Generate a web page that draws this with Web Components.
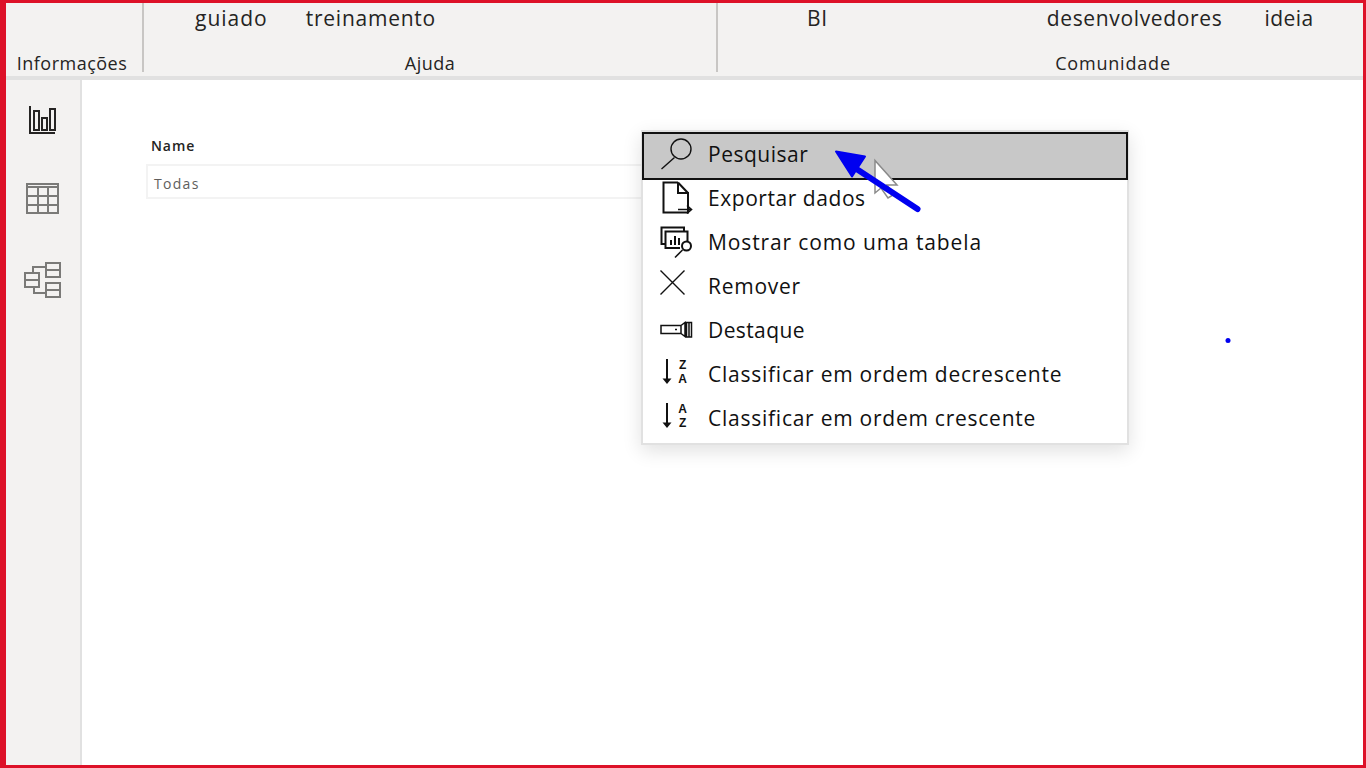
<!DOCTYPE html>
<html lang="pt"><head><meta charset="utf-8"><title>Power BI</title>
<style>
html,body{margin:0;padding:0;background:#fff;overflow:hidden}
body{font-family:"Open Sans","Liberation Sans",sans-serif;color:#252423}
</style></head><body>
<template id="t-frame"><style>
:host{display:flex;flex-direction:column;box-sizing:border-box;width:1366px;height:768px;border-style:solid;border-color:#dd1128;border-width:3px 3px 3px 6px;position:relative;overflow:hidden;background:#fff}
.main{flex:1;display:flex;min-height:0}
</style><slot name="ribbon"></slot><div class="main"><slot name="side"></slot><slot></slot></div><slot name="over"></slot></template>

<template id="t-ribbon"><style>
:host{display:flex;height:73px;flex:none;background:#f3f2f1;border-bottom:4px solid #e1e1e1;box-sizing:content-box;overflow:hidden}
</style><slot></slot></template>

<template id="t-group"><style>
:host{display:flex;flex-direction:column;flex:none;height:69px;box-sizing:content-box;border-right:2px solid #c8c6c4;width:var(--w);color:#252423}
:host([last]){border-right:0}
.items{flex:none;height:47px;display:flex;align-items:flex-start;font-size:21px;line-height:30px;padding-top:0}
.lab{flex:none;text-align:center;font-size:18px;line-height:22px;padding-top:2px;letter-spacing:.5px;white-space:nowrap}
</style><div class="items"><slot></slot></div><div class="lab"><slot name="label"></slot></div></template>

<template id="t-item"><style>
:host{display:block;white-space:nowrap;margin-left:var(--ml,0);letter-spacing:var(--ls,.65px)}
</style><slot></slot></template>

<template id="t-side"><style>
:host{display:flex;flex-direction:column;width:74px;flex:none;background:#f3f2f1;border-right:2px solid #e1e1e1;align-items:flex-start;padding-top:23px;box-sizing:content-box}
svg{display:block;width:74px;height:40px;margin-bottom:40px;fill:none;stroke:#7a7a78;stroke-width:2;shape-rendering:crispEdges}
svg.b{stroke:#252423}
svg.t{margin-bottom:39px}
</style>
<svg class="b" viewBox="0 0 74 40"><path d="M24 3V29.500H49"/><path d="M28 7.500h5v19h-5zM36 14.500h5v12h-5zM44 5.500h5v21h-5z" stroke-width="2"/></svg>
<svg class="t" viewBox="0 0 74 40"><path d="M21 1h31v29H21zM21 4h31M21 13h31M21 21.500h31M31.500 4v26M41.500 4v26"/></svg>
<svg viewBox="0 0 74 40"><path d="M40 1h14v14H40zM40 8h14M19 11h14v14H19zM19 18h14M40 21h14v14H40zM40 28h14M27 11V5H40M28 25v6H40"/></svg>
</template>

<template id="t-canvas"><style>
:host{display:block;flex:1;position:relative;background:#fff;padding:56px 0 0 64px;box-sizing:border-box;min-width:0}
.name{font-size:14px;line-height:20px;font-weight:600;letter-spacing:.9px;padding-left:5px;color:#252423}
.box{margin-top:8px;width:530px;height:31px;border:2px solid #f3f3f3;font-size:14px;line-height:35px;padding-left:6px;color:#605e5c;letter-spacing:1.3px;box-sizing:content-box}
</style><div class="name"><slot name="name"></slot></div><div class="box"><slot name="value"></slot></div><slot></slot></template>

<template id="t-menu"><style>
:host{display:block;position:absolute;left:635px;top:127px;width:484px;background:#fff;border:2px solid #e1e1e1;box-shadow:0 6px 18px rgba(0,0,0,.12);padding:0 0 3px;box-sizing:content-box}
</style><slot></slot></template>

<template id="t-row"><style>
:host{display:flex;align-items:center;height:44px;padding-left:17px;gap:12px;box-sizing:border-box;font-size:21px;letter-spacing:.75px;color:#111;white-space:nowrap;position:relative}
:host([active]){height:48px;margin:0 0 -4px -1px;padding:0 0 4px 18px;background:#c8c8c8;outline:2px solid #111;outline-offset:-2px;width:486px}
.ic{width:36px;height:36px;flex:none;display:block}
::slotted(svg){display:block;width:36px;height:36px}
</style><span class="ic"><slot name="icon"></slot></span><span><slot></slot></span></template>

<template id="t-over"><style>
:host{display:block;position:absolute;left:-6px;top:-3px;width:1366px;height:768px;pointer-events:none}
svg{display:block;position:absolute;left:0;top:0}
</style><svg width="1366" height="768" viewBox="0 0 1366 768">
<path d="M875 160.500V193l6-5 7 10 5-3-6-10h10z" fill="#fff" stroke="#8a8a8a" stroke-width="1.500"/>
<path d="M917.500 209L852 166" stroke="#0000f0" stroke-width="6" stroke-linecap="round" fill="none"/>
<path d="M836 151.500L865 156.500 852 176.500z" fill="#0000f0" stroke="#0000f0" stroke-width="2" stroke-linejoin="round"/>
<circle cx="1228" cy="340.500" r="2.500" fill="#0000f0"/>
</svg></template>

<script>
function def(tag,tid){customElements.define(tag,class extends HTMLElement{constructor(){super();this.attachShadow({mode:'open'}).appendChild(document.getElementById(tid).content.cloneNode(true));}});}
[['pb-frame','t-frame'],['pb-ribbon','t-ribbon'],['pb-group','t-group'],['pb-item','t-item'],['pb-side','t-side'],['pb-canvas','t-canvas'],['pb-menu','t-menu'],['pb-row','t-row'],['pb-over','t-over']].forEach(a=>def(a[0],a[1]));
</script>

<pb-frame>
<pb-ribbon slot="ribbon">
<pb-group style="--w:136px"><span slot="label" style="margin-right:4px">Informações</span></pb-group>
<pb-group style="--w:572px"><pb-item style="--ml:51px;--ls:1px">guiado</pb-item><pb-item style="--ml:38px;--ls:.75px">treinamento</pb-item><span slot="label">Ajuda</span></pb-group>
<pb-group last style="--w:790px"><pb-item style="--ml:89px">BI</pb-item><pb-item style="--ml:219px">desenvolvedores</pb-item><pb-item style="--ml:42px;--ls:.5px">ideia</pb-item><span slot="label" style="letter-spacing:.8px">Comunidade</span></pb-group>
</pb-ribbon>
<pb-side slot="side"></pb-side>
<pb-canvas><span slot="name">Name</span><span slot="value">Todas</span></pb-canvas>
<pb-menu slot="over">
<pb-row active style="letter-spacing:.5px"><svg slot="icon" viewBox="0 0 36 36" fill="none" stroke="#111" stroke-width="1.400"><circle cx="21" cy="13" r="10"/><path d="M14.500 21.500L1.500 33"/></svg>Pesquisar</pb-row>
<pb-row style="letter-spacing:.55px"><svg slot="icon" viewBox="0 0 36 36" fill="none" stroke="#111" stroke-width="2"><path d="M18 2.500H3.500V32.500H28V26M18 2.500V13H28V26M18 2.500L28 13" stroke-linejoin="miter"/><path d="M18 29.500H31M27 25.500l4.500 4-4.500 4" stroke-width="1.600"/></svg>Exportar dados</pb-row>
<pb-row style="letter-spacing:.88px"><svg slot="icon" viewBox="0 0 36 36" fill="none" stroke="#111" stroke-width="2"><path d="M5 20H1.500V3.500H24V7"/><path d="M20 24H5.500V7.500H27.500V17"/><path d="M11 21v-5M15 21v-9M19 21v-7"/><circle cx="26.500" cy="22" r="4.500"/><path d="M22.500 26L15 33.500" stroke-width="1.600"/></svg>Mostrar como uma tabela</pb-row>
<pb-row><svg slot="icon" viewBox="0 0 36 36" fill="none" stroke="#111" stroke-width="1.400"><path d="M0.500 2.500L24.500 26.500M24.500 2.500L0.500 26.500"/></svg>Remover</pb-row>
<pb-row style="letter-spacing:.4px"><svg slot="icon" viewBox="0 0 36 36" fill="none" stroke="#111" stroke-width="1.500"><path d="M1 13.500H21V21.500H1zM21 13.500l4-3V24.500l-4-3M26.500 10.500h5V25h-5zM29 10.500V25"/><path d="M15 17.500h2"/></svg>Destaque</pb-row>
<pb-row><svg slot="icon" viewBox="0 0 36 36" fill="none" stroke="#111" stroke-width="2"><path d="M7 3V25"/><path d="M2.500 22.500H11.500L7 28z" fill="#111" stroke="none"/><text x="23" y="13" text-anchor="middle" font-family="Liberation Sans" font-size="12" font-weight="700" fill="#111" stroke="none">Z</text><text x="23" y="27" text-anchor="middle" font-family="Liberation Sans" font-size="12" font-weight="700" fill="#111" stroke="none">A</text></svg>Classificar em ordem decrescente</pb-row>
<pb-row><svg slot="icon" viewBox="0 0 36 36" fill="none" stroke="#111" stroke-width="2"><path d="M7 3V25"/><path d="M2.500 22.500H11.500L7 28z" fill="#111" stroke="none"/><text x="23" y="13" text-anchor="middle" font-family="Liberation Sans" font-size="12" font-weight="700" fill="#111" stroke="none">A</text><text x="23" y="27" text-anchor="middle" font-family="Liberation Sans" font-size="12" font-weight="700" fill="#111" stroke="none">Z</text></svg>Classificar em ordem crescente</pb-row>
</pb-menu>
<pb-over slot="over"></pb-over>
</pb-frame>
</body></html>
